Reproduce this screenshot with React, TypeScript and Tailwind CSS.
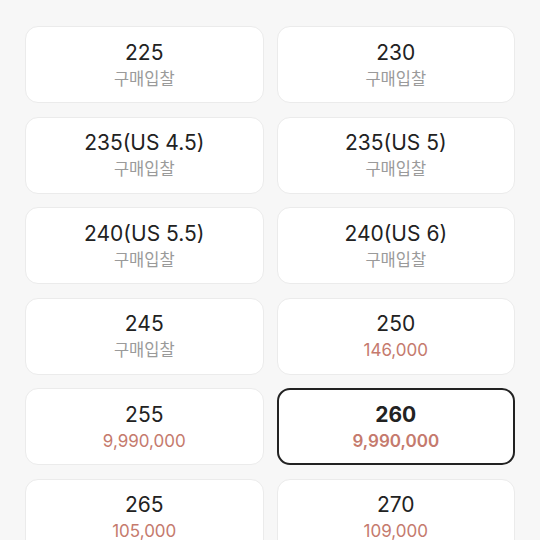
import React from "react";

type Item = { size: string; sub: string; price?: boolean; selected?: boolean };

const items: Item[] = [
  { size: "225", sub: "구매입찰" },
  { size: "230", sub: "구매입찰" },
  { size: "235(US 4.5)", sub: "구매입찰" },
  { size: "235(US 5)", sub: "구매입찰" },
  { size: "240(US 5.5)", sub: "구매입찰" },
  { size: "240(US 6)", sub: "구매입찰" },
  { size: "245", sub: "구매입찰" },
  { size: "250", sub: "146,000", price: true },
  { size: "255", sub: "9,990,000", price: true },
  { size: "260", sub: "9,990,000", price: true, selected: true },
  { size: "265", sub: "105,000", price: true },
  { size: "270", sub: "109,000", price: true },
];

export default function App() {
  return (
    <div
      className="w-[540px] h-[540px] overflow-hidden bg-[#f7f7f7]"
      style={{ fontFamily: "Inter, 'Noto Sans CJK KR', sans-serif" }}
    >
      <div className="grid grid-cols-2 gap-x-[13px] gap-y-[13.6px] pl-[25px] pr-[25px] pt-[26px]">
        {items.map((it) => (
          <div
            key={it.size}
            className={
              it.selected
                ? "h-[77px] rounded-[13px] bg-white border-2 border-[#222] flex flex-col items-center justify-center"
                : "h-[77px] rounded-[13px] bg-white border border-[#ebebeb] flex flex-col items-center justify-center"
            }
          >
            <div
              className={
                it.selected
                  ? "text-[21px] leading-[26px] font-bold text-[#222]"
                  : "text-[21px] leading-[26px] text-[#222]"
              }
            >
              {it.size}
            </div>
            <div
              className={
                it.price
                  ? it.selected
                    ? "mt-[2px] text-[17px] leading-[22px] font-semibold text-[#c57a6d]"
                    : "mt-[2px] text-[17px] leading-[22px] text-[#c57a6d]"
                  : "mt-[2px] text-[16.5px] leading-[22px] text-[#9a9a9a]"
              }
            >
              {it.sub}
            </div>
          </div>
        ))}
      </div>
    </div>
  );
}
